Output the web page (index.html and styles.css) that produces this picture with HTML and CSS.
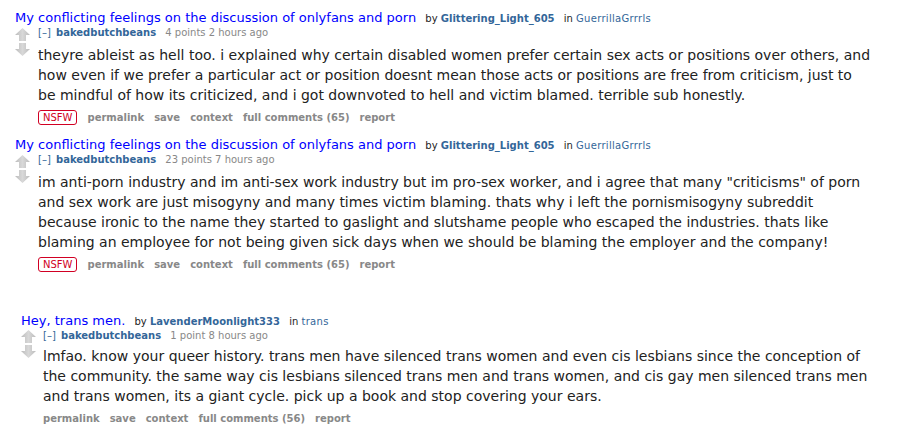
FILE: index.html
```html
<!DOCTYPE html>
<html lang="en">
<head>
    <meta charset="UTF-8">
    <title>comments</title>
    <link rel="stylesheet" href="styles.css">
</head>
<body>

    <!-- shared gradient for the vote arrows -->
    <svg width="0" height="0" class="defs">
        <defs>
            <linearGradient id="grad" x1="0" y1="0" x2="1" y2="0">
                <stop offset="0" stop-color="#bcbcbc"/>
                <stop offset="0.5" stop-color="#d8d8d8"/>
                <stop offset="1" stop-color="#bcbcbc"/>
            </linearGradient>
        </defs>
    </svg>

    <div class="listing">

        <div class="thing">
            <p class="parent">
                <a class="title" href="#">My conflicting feelings on the discussion of onlyfans and porn</a>
                by <a class="author" href="#">Glittering_Light_605</a>
                in <a class="subreddit" href="#">GuerrillaGrrrls</a>
            </p>
            <div class="entry_row">
                <div class="midcol">
                    <svg class="arrow" width="15" height="13" viewBox="0 0 15 13"><path d="M7.5 0 L15 7 H11 V13 H4 V7 H0 Z" fill="url(#grad)"/></svg>
                    <svg class="arrow" width="15" height="13" viewBox="0 0 15 13"><path d="M7.5 13 L15 6 H11 V0 H4 V6 H0 Z" fill="url(#grad)"/></svg>
                </div>
                <div class="entry">
                    <p class="tagline"><a class="expand" href="#">[–]</a> <a class="author" href="#">bakedbutchbeans</a> <span class="score">4 points</span> 2 hours ago</p>
                    <div class="md">theyre ableist as hell too. i explained why certain disabled women prefer certain sex acts or positions over others, and how even if we prefer a particular act or position doesnt mean those acts or positions are free from criticism, just to be mindful of how its criticized, and i got downvoted to hell and victim blamed. terrible sub honestly.</div>
                    <ul class="buttons">
                        <li><span class="nsfw">NSFW</span></li>
                        <li><a href="#">permalink</a></li>
                        <li><a href="#">save</a></li>
                        <li><a href="#">context</a></li>
                        <li><a href="#">full comments (65)</a></li>
                        <li><a href="#">report</a></li>
                    </ul>
                </div>
            </div>
        </div>

        <div class="thing">
            <p class="parent">
                <a class="title" href="#">My conflicting feelings on the discussion of onlyfans and porn</a>
                by <a class="author" href="#">Glittering_Light_605</a>
                in <a class="subreddit" href="#">GuerrillaGrrrls</a>
            </p>
            <div class="entry_row">
                <div class="midcol">
                    <svg class="arrow" width="15" height="13" viewBox="0 0 15 13"><path d="M7.5 0 L15 7 H11 V13 H4 V7 H0 Z" fill="url(#grad)"/></svg>
                    <svg class="arrow" width="15" height="13" viewBox="0 0 15 13"><path d="M7.5 13 L15 6 H11 V0 H4 V6 H0 Z" fill="url(#grad)"/></svg>
                </div>
                <div class="entry">
                    <p class="tagline"><a class="expand" href="#">[–]</a> <a class="author" href="#">bakedbutchbeans</a> <span class="score">23 points</span> 7 hours ago</p>
                    <div class="md">im anti-porn industry and im anti-sex work industry but im pro-sex worker, and i agree that many "criticisms" of porn and sex work are just misogyny and many times victim blaming. thats why i left the pornismisogyny subreddit because ironic to the name they started to gaslight and slutshame people who escaped the industries. thats like blaming an employee for not being given sick days when we should be blaming the employer and the company!</div>
                    <ul class="buttons">
                        <li><span class="nsfw">NSFW</span></li>
                        <li><a href="#">permalink</a></li>
                        <li><a href="#">save</a></li>
                        <li><a href="#">context</a></li>
                        <li><a href="#">full comments (65)</a></li>
                        <li><a href="#">report</a></li>
                    </ul>
                </div>
            </div>
        </div>

        <div class="thing thing_gap">
            <p class="parent">
                <a class="title" href="#">Hey, trans men.</a>
                by <a class="author" href="#">LavenderMoonlight333</a>
                in <a class="subreddit" href="#">trans</a>
            </p>
            <div class="entry_row">
                <div class="midcol">
                    <svg class="arrow" width="15" height="13" viewBox="0 0 15 13"><path d="M7.5 0 L15 7 H11 V13 H4 V7 H0 Z" fill="url(#grad)"/></svg>
                    <svg class="arrow" width="15" height="13" viewBox="0 0 15 13"><path d="M7.5 13 L15 6 H11 V0 H4 V6 H0 Z" fill="url(#grad)"/></svg>
                </div>
                <div class="entry">
                    <p class="tagline"><a class="expand" href="#">[–]</a> <a class="author" href="#">bakedbutchbeans</a> <span class="score">1 point</span> 8 hours ago</p>
                    <div class="md">lmfao. know your queer history. trans men have silenced trans women and even cis lesbians since the conception of the community. the same way cis lesbians silenced trans men and trans women, and cis gay men silenced trans men and trans women, its a giant cycle. pick up a book and stop covering your ears.</div>
                    <ul class="buttons">
                        <li><a href="#">permalink</a></li>
                        <li><a href="#">save</a></li>
                        <li><a href="#">context</a></li>
                        <li><a href="#">full comments (56)</a></li>
                        <li><a href="#">report</a></li>
                    </ul>
                </div>
            </div>
        </div>

    </div>

</body>
</html>
```

FILE: styles.css
```css
body {
    margin: 8px;
    background: #fff;
    font-family: "DejaVu Sans", Verdana, sans-serif;
    color: #222;
}

a {
    text-decoration: none;
}

.defs {
    position: absolute;
}

.listing {
    padding-left: 7px;
}

.thing {
    margin-bottom: 9px;
}

/* last item sits further down and a bit to the right */
.thing_gap {
    margin-top: 38px;
    margin-left: 6px;
}

.parent {
    margin: 0;
    padding-top: 2px;
    font-size: 10px;
    line-height: 15px;
}

.parent .title {
    font-size: 13px;
    color: #0000ff;
    margin-right: 6px;
}

.author {
    color: #369;
    font-weight: bold;
    margin-right: 6px;
}

.subreddit {
    color: #369;
    letter-spacing: 0.3px;
}

.entry_row {
    display: flex;
}

.midcol {
    width: 15px;
    margin-right: 8px;
    padding-top: 2px;
    display: flex;
    flex-direction: column;
    gap: 2px;
}

.thing_gap .midcol {
    margin-right: 7px;
    padding-top: 1px;
}

.arrow {
    display: block;
}

.entry {
    flex: 1;
}

.tagline {
    margin: 0;
    font-size: 10px;
    line-height: 14px;
    color: #888;
}

.tagline .expand {
    color: #369;
    margin-right: 2px;
}

.md {
    max-width: 835px;
    margin-top: 5px;
    font-size: 14px;
    line-height: 20px;
}

.thing_gap .md {
    margin-top: 3px;
}

.buttons {
    list-style: none;
    margin: 5px 0 0;
    padding: 0;
    display: flex;
    align-items: center;
    gap: 10px;
    font-size: 10px;
    line-height: 16px;
}

.buttons a {
    color: #888;
    font-weight: bold;
}

.nsfw {
    display: inline-block;
    color: #d10023;
    border: 1px solid #d10023;
    border-radius: 3px;
    padding: 0 4px;
    line-height: 13px;
}
```
